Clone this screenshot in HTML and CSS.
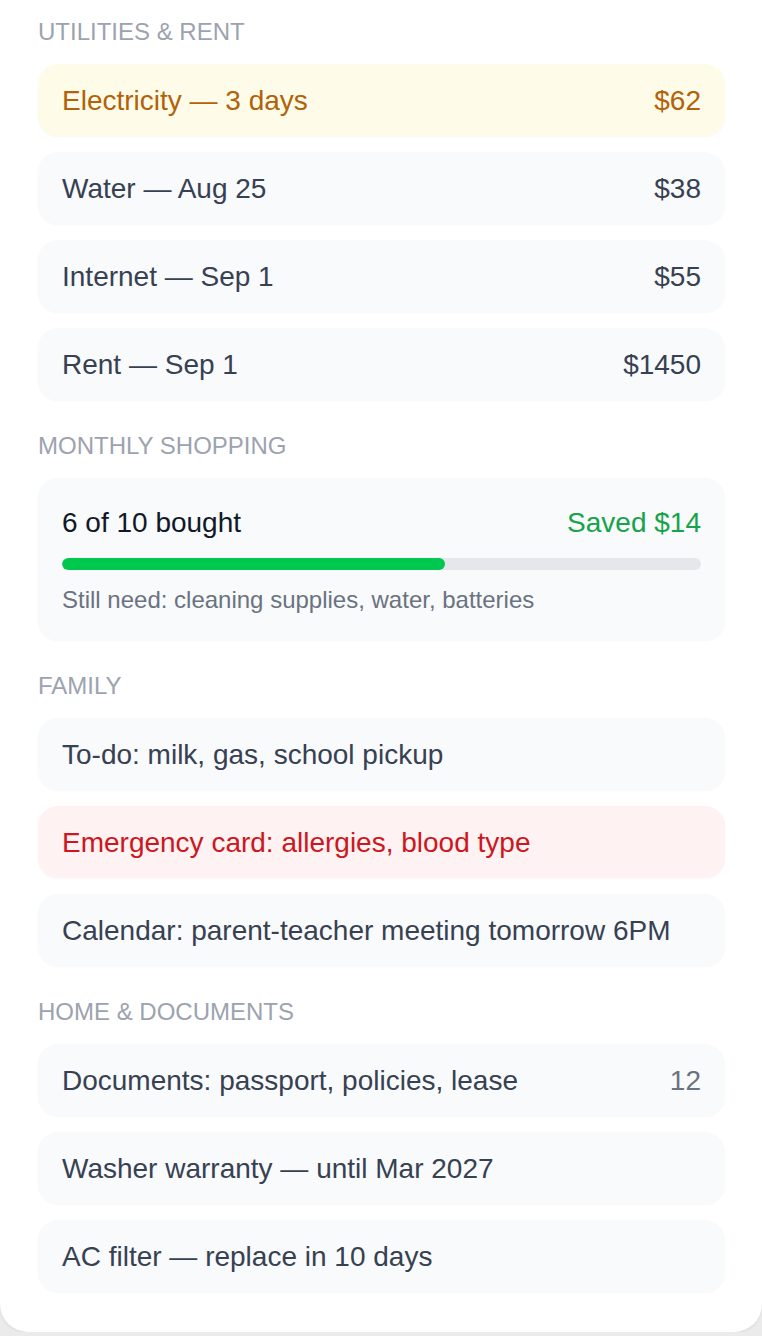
FILE: index.html
```html
<!DOCTYPE html>
<html lang="en">
<head>
    <meta charset="UTF-8">
    <meta name="viewport" content="width=device-width, initial-scale=1.0">
    <title>Household</title>
    <link rel="stylesheet" href="styles.css">
</head>
<body>
    <div class="panel">
        <section class="group">
            <h2 class="group-title">Utilities &amp; Rent</h2>
            <div class="list">
                <div class="row row-warn"><span>Electricity — 3 days</span><span>$62</span></div>
                <div class="row"><span>Water — Aug 25</span><span>$38</span></div>
                <div class="row"><span>Internet — Sep 1</span><span>$55</span></div>
                <div class="row"><span>Rent — Sep 1</span><span>$1450</span></div>
            </div>
        </section>

        <section class="group">
            <h2 class="group-title">Monthly Shopping</h2>
            <div class="shopping">
                <div class="shopping-top">
                    <span class="bought">6 of 10 bought</span>
                    <span class="saved">Saved $14</span>
                </div>
                <div class="progress"><div class="progress-fill" style="width: 60%"></div></div>
                <p class="still-need">Still need: cleaning supplies, water, batteries</p>
            </div>
        </section>

        <section class="group">
            <h2 class="group-title">Family</h2>
            <div class="list">
                <div class="row"><span>To-do: milk, gas, school pickup</span></div>
                <div class="row row-alert"><span>Emergency card: allergies, blood type</span></div>
                <div class="row"><span>Calendar: parent-teacher meeting tomorrow 6PM</span></div>
            </div>
        </section>

        <section class="group">
            <h2 class="group-title">Home &amp; Documents</h2>
            <div class="list">
                <div class="row"><span>Documents: passport, policies, lease</span><span class="count">12</span></div>
                <div class="row"><span>Washer warranty — until Mar 2027</span></div>
                <div class="row"><span>AC filter — replace in 10 days</span></div>
            </div>
        </section>
    </div>
</body>
</html>
```

FILE: styles.css
```css
body {
    margin: 0;
    background-color: #ebebec;
    font-family: "Liberation Sans", Arial, sans-serif;
    color: #374151;
}
.panel {
    background-color: #fff;
    border-radius: 0 0 28px 28px;
    padding: 16px 37px 40px 38px;
    box-shadow: 0 1px 3px rgba(0, 0, 0, 0.08);
}
.group + .group {
    margin-top: 30px;
}
.group-title {
    margin: 0 0 16px;
    font-size: 24px;
    font-weight: normal;
    line-height: 32px;
    text-transform: uppercase;
    color: #9ca3af;
}
.list {
    display: flex;
    flex-direction: column;
    gap: 16px;
}
.row {
    display: flex;
    justify-content: space-between;
    align-items: center;
    height: 72px;
    padding: 1px 24px 0;
    box-sizing: border-box;
    border-radius: 20px;
    background-color: #f8fafc;
    box-shadow: 0 1px 2px rgba(15, 23, 42, 0.03);
    font-size: 28px;
    color: #374151;
}
.row-warn {
    background-color: #fefce8;
    color: #b1620a;
}
.row-alert {
    background-color: #fef2f2;
    color: #cc1720;
}
.count {
    color: #6b7280;
}
.shopping {
    padding: 24px 24px 22px;
    border-radius: 20px;
    background-color: #f8fafc;
    box-shadow: 0 1px 2px rgba(15, 23, 42, 0.03);
}
.shopping-top {
    display: flex;
    justify-content: space-between;
    font-size: 28px;
    line-height: 42px;
}
.bought {
    color: #111827;
}
.saved {
    color: #16a34a;
}
.progress {
    margin-top: 14px;
    height: 12px;
    border-radius: 6px;
    background-color: #e5e7eb;
    overflow: hidden;
}
.progress-fill {
    height: 100%;
    border-radius: 6px;
    background-color: #00c74e;
}
.still-need {
    margin: 12px 0 0;
    font-size: 24px;
    line-height: 36px;
    color: #6b7280;
}
```
